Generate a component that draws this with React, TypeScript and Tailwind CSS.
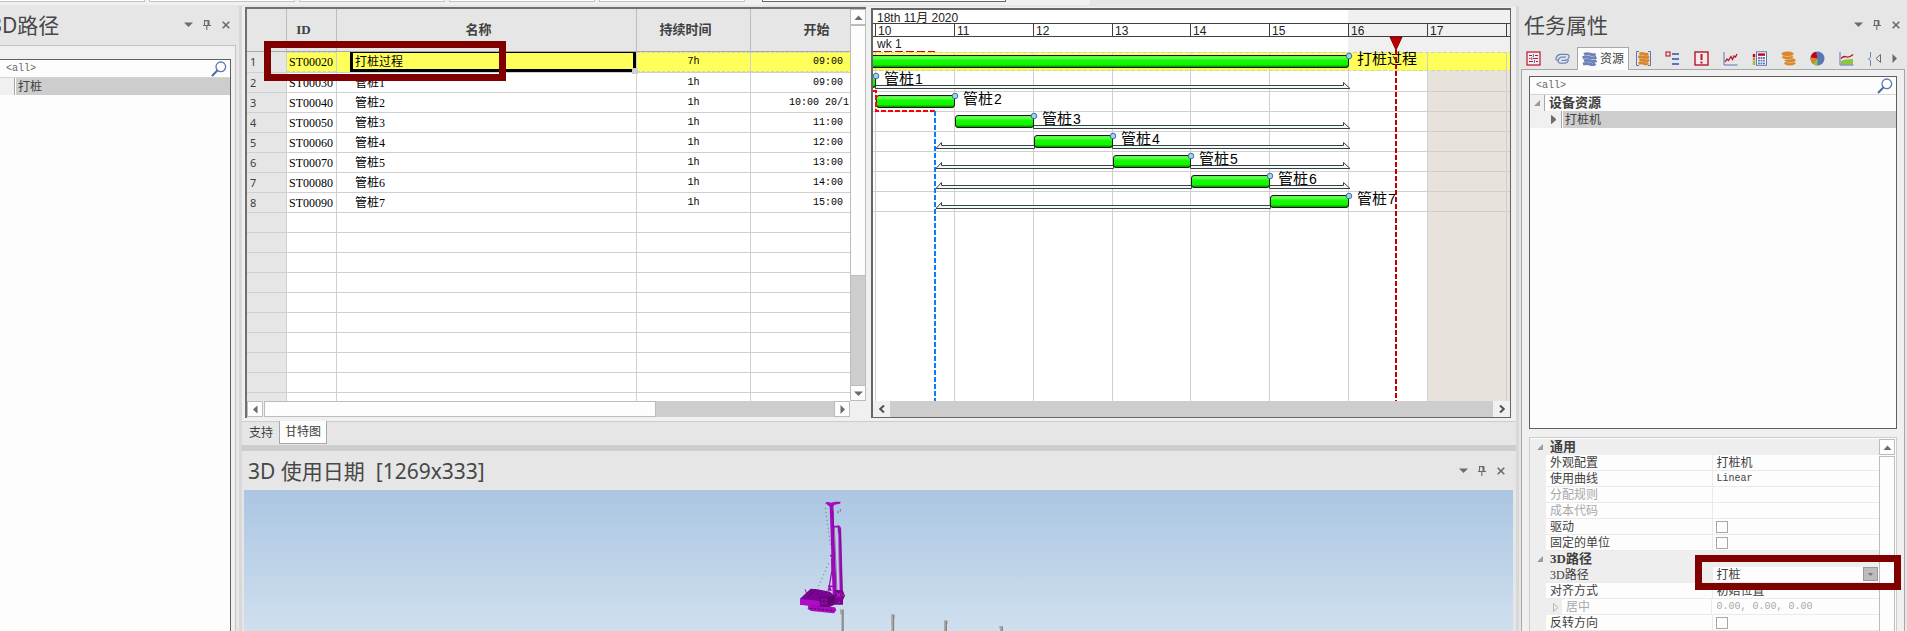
import React from "react";

const UI = "font-['Noto_Sans','Noto_Sans_CJK_SC',sans-serif]";
const SONG = "font-['Liberation_Serif','Noto_Sans_CJK_SC',sans-serif]";
const MONO = "font-['Liberation_Mono','Noto_Sans_CJK_SC',monospace]";

/* ---------- small glyphs ---------- */

function Triangle({ dir, hollow = false }: { dir: "up" | "down" | "left" | "right"; hollow?: boolean }) {
  const points = {
    up: "0.5,7 4.5,2.5 8.5,7",
    down: "0,2.5 9,2.5 4.5,7",
    left: "6.5,0.5 2,4.5 6.5,8.5",
    right: "2.5,0 7,4.5 2.5,9",
  }[dir];
  return (
    <svg width="9" height="9" viewBox="0 0 9 9" aria-hidden="true">
      <polygon points={points} fill={hollow ? "none" : "#6b6b6b"} stroke={hollow ? "#6b6b6b" : "none"} />
    </svg>
  );
}

function Expander({ dir }: { dir: "open" | "closed" | "hollow" }) {
  if (dir === "open") {
    return (
      <svg width="6" height="6" viewBox="0 0 6 6" aria-hidden="true">
        <polygon points="6,0 6,6 0,6" fill="#9b9b9b" />
      </svg>
    );
  }
  return (
    <svg width="6" height="9" viewBox="0 0 6 9" aria-hidden="true">
      <polygon
        points="0.5,0.5 5,4.5 0.5,8.5"
        fill={dir === "closed" ? "#6b6b6b" : "none"}
        stroke={dir === "closed" ? "#6b6b6b" : "#b5b5b5"}
      />
    </svg>
  );
}

function Magnifier() {
  return (
    <svg width="16" height="16" viewBox="0 0 16 16" className="shrink-0" aria-hidden="true">
      <circle cx="9.8" cy="5.8" r="4.8" fill="#fff" stroke="#5a78ad" strokeWidth="1.3" />
      <path d="M6.4 9.4 L1 15" stroke="#4a689f" strokeWidth="2" />
    </svg>
  );
}

function PanelTitle({ children, className = "" }: { children: React.ReactNode; className?: string }) {
  return (
    <div className={`flex shrink-0 items-center justify-between ${className}`}>
      <h2 className={`${UI} whitespace-pre text-[21px] leading-7 font-normal text-[#484848]`}>{children}</h2>
      <div className="flex items-center gap-[5px]">
        <button aria-label="菜单" className="flex w-[14px] justify-center">
          <Triangle dir="down" />
        </button>
        <button aria-label="固定" className="flex w-[14px] justify-center">
          <svg width="8" height="10" viewBox="0 0 8 10" aria-hidden="true">
            <path d="M1.5 5 V0.6 H5.5 V5 M0 5.5 H8 M3.8 6 V10" fill="none" stroke="#6b6b6b" strokeWidth="1.1" />
            <path d="M5.5 0.5 V5" stroke="#6b6b6b" strokeWidth="2" />
          </svg>
        </button>
        <button aria-label="关闭" className="flex w-[14px] justify-center">
          <svg width="8" height="8" viewBox="0 0 8 8" aria-hidden="true">
            <path d="M0.7 0.7 L7.3 7.3 M7.3 0.7 L0.7 7.3" stroke="#6b6b6b" strokeWidth="1.6" />
          </svg>
        </button>
      </div>
    </div>
  );
}

function SearchRow() {
  return (
    <div className="flex h-[18px] shrink-0 items-center border-b border-[#d4d4d4] bg-[#fdfdfd] pr-[3px] pl-[6px]">
      <input
        aria-label="筛选"
        defaultValue="<all>"
        className={`${MONO} h-[14px] min-w-0 flex-1 bg-transparent text-[10px] leading-[14px] text-[#666] outline-none`}
      />
      <Magnifier />
    </div>
  );
}

function ScrollButton({ dir }: { dir: "up" | "down" | "left" | "right" }) {
  return (
    <button
      aria-label={dir}
      className="flex h-4 w-4 shrink-0 items-center justify-center border border-[#bcbcbc] bg-[#fdfdfd]"
    >
      <Triangle dir={dir} />
    </button>
  );
}

/* ---------- top strip ---------- */

function TopStrip() {
  return (
    <div className="flex h-[6px] shrink-0 bg-[#e6e6e6]">
      <div className="flex h-[5px] gap-1 rounded-br bg-[#f0f0f0] pr-[84px]">
        <div className="h-[2px] w-[145px] border-r border-b border-[#c4c4c4] bg-[#fdfdfd]" />
        <div className="h-[2px] w-[146px] border-x border-b border-[#c4c4c4] bg-[#fdfdfd]" />
        <div className="h-[2px] w-[146px] border-x border-b border-[#c4c4c4] bg-[#fdfdfd]" />
        <div className="h-[2px] w-[146px] border-x border-b border-[#c4c4c4] bg-[#fdfdfd]" />
        <div className="h-[2px] w-[146px] border-x border-b border-[#c4c4c4] bg-[#fdfdfd]" />
        <div className="ml-[13px] h-[2px] w-[244px] border-x border-b border-[#666] bg-[#fdfdfd]" />
      </div>
    </div>
  );
}

/* ---------- left panel ---------- */

function PathPanel() {
  return (
    <aside className="flex w-[239px] shrink-0 flex-col overflow-hidden pr-[3px]">
      <PanelTitle className="-ml-[10px] h-[39px] pr-[3px] pb-[2px]">3D路径</PanelTitle>
      <div className="flex flex-1 flex-col border-t border-r border-[#c4c4c4] bg-[#f0f0f0] pt-[13px] pr-1">
        <div className="flex flex-1 flex-col border-t border-r border-[#606060] bg-[#fdfdfd]">
          <SearchRow />
          <div className="flex h-[17px]">
            <div className="w-[15px] border-r border-[#a8a8a8] bg-[#f0f0f0]" />
            <div
              className={`${SONG} ml-px flex flex-1 items-center bg-[#cdcdcd] pl-[2px] text-[12px] leading-4 text-[#404040]`}
            >
              打桩
            </div>
          </div>
        </div>
      </div>
    </aside>
  );
}

/* ---------- task table ---------- */

const TASKS = [
  { id: "ST00020", name: "打桩过程", dur: "7h", start: "09:00" },
  { id: "ST00030", name: "管桩1", dur: "1h", start: "09:00" },
  { id: "ST00040", name: "管桩2", dur: "1h", start: "10:00 20/1" },
  { id: "ST00050", name: "管桩3", dur: "1h", start: "11:00" },
  { id: "ST00060", name: "管桩4", dur: "1h", start: "12:00" },
  { id: "ST00070", name: "管桩5", dur: "1h", start: "13:00" },
  { id: "ST00080", name: "管桩6", dur: "1h", start: "14:00" },
  { id: "ST00090", name: "管桩7", dur: "1h", start: "15:00" },
];
const EMPTY_ROWS = Array.from({ length: 30 }, (_, i) => i);

const CELL = "border-r border-b border-[#cfcfcf] p-0";
const HEAD =
  "border-r border-b border-[#a8a8a8] border-r-[#bcbcbc] bg-[#e6e6e6] p-0 pr-4 text-center text-[13px] font-bold text-[#404040]";

function TaskTable() {
  return (
    <section className="flex min-w-0 flex-[619_1_0%] flex-col border-t-2 border-l-2 border-[#707070]">
      <div className="flex min-h-0 flex-1">
        <div className="relative min-w-0 flex-1 overflow-hidden bg-white">
          <table className={`${SONG} w-[652px] table-fixed border-separate border-spacing-0 text-[12px] leading-4 text-black`}>
            <colgroup>
              <col className="w-10" />
              <col className="w-[50px]" />
              <col className="w-[300px]" />
              <col className="w-[114px]" />
              <col className="w-[148px]" />
            </colgroup>
            <thead>
              <tr className="h-[43px]">
                <th className={HEAD} aria-label="行" />
                <th className={HEAD}>ID</th>
                <th className={HEAD}>名称</th>
                <th className={HEAD}>持续时间</th>
                <th className={HEAD}>开始</th>
              </tr>
            </thead>
            <tbody>
              {TASKS.map((t, i) => {
                const active = i === 0;
                const fill = active ? "h-5 bg-[#ffff5a] border-y border-dashed border-[#cfcfcf]" : "h-[19px]";
                return (
                  <tr key={t.id}>
                    <td className={`${CELL} ${UI} bg-[#e6e6e6] pl-[3px] text-[11px] text-[#404040]`}>{i + 1}</td>
                    <td className={CELL}>
                      <div className={`${fill} flex items-center pl-[2px]`}>{t.id}</div>
                    </td>
                    <td className={`${CELL} ${active ? "bg-[#ffff5a]" : ""}`}>
                      {active ? (
                        <div className="relative ml-[13px] flex h-5 items-center border-x-[3px] border-t border-b-[3px] border-black bg-[#ffff5a] pt-[2px] pl-[2px]">
                          {t.name}
                          <span className="absolute -right-[5px] -bottom-[5px] h-[6px] w-[6px] bg-[#cfcfcf]" />
                        </div>
                      ) : (
                        <div className="flex h-[19px] items-center pl-[18px]">{t.name}</div>
                      )}
                    </td>
                    <td className={CELL}>
                      <div className={`${fill} ${MONO} flex items-center justify-center text-[10px]`}>{t.dur}</div>
                    </td>
                    <td className={CELL}>
                      <div
                        className={`${fill} ${MONO} flex items-center justify-end text-[10px] whitespace-nowrap ${
                          t.start.length > 5 ? "pr-[49px]" : "pr-[55px]"
                        }`}
                      >
                        {t.start}
                      </div>
                    </td>
                  </tr>
                );
              })}
              {EMPTY_ROWS.map((r) => (
                <tr key={r} className="h-5">
                  <td className={`${CELL} bg-[#e6e6e6]`} />
                  <td className={CELL} />
                  <td className={CELL} />
                  <td className={CELL} />
                  <td className={CELL} />
                </tr>
              ))}
            </tbody>
          </table>
          <div className="pointer-events-none absolute top-8 left-[17px] h-10 w-[242px] border-[7px] border-[#800000]" />
        </div>
        <div className="flex w-4 shrink-0 flex-col border-r border-l border-[#bcbcbc] bg-[#cdcdcd]">
          <div className="-mx-px">
            <ScrollButton dir="up" />
          </div>
          <div className="flex-[250_1_0%] border-y border-[#bcbcbc] bg-[#fdfdfd]" />
          <div className="flex-[110_1_0%]" />
          <div className="-mx-px">
            <ScrollButton dir="down" />
          </div>
        </div>
      </div>
      <div className="flex h-[17px] shrink-0">
        <ScrollButton dir="left" />
        <div className="ml-px h-4 flex-[390_1_0%] border border-[#bcbcbc] bg-[#fdfdfd]" />
        <div className="h-4 flex-[178_1_0%] bg-[#cdcdcd]" />
        <ScrollButton dir="right" />
        <div className="w-4 shrink-0" />
      </div>
    </section>
  );
}

/* ---------- gantt chart ---------- */

const hourX = (h: number) => Math.round(2 + 78.85 * (h - 10));
const HOURS = [10, 11, 12, 13, 14, 15, 16, 17, 18];
const BARS = [
  { label: "打桩过程", num: "", from: 9, to: 16, early: false, late: false },
  { label: "管桩", num: "1", from: 9, to: 10, early: false, late: true },
  { label: "管桩", num: "2", from: 10, to: 11, early: false, late: false },
  { label: "管桩", num: "3", from: 11, to: 12, early: false, late: true },
  { label: "管桩", num: "4", from: 12, to: 13, early: true, late: true },
  { label: "管桩", num: "5", from: 13, to: 14, early: true, late: true },
  { label: "管桩", num: "6", from: 14, to: 15, early: true, late: true },
  { label: "管桩", num: "7", from: 15, to: 16, early: true, late: false },
];

function GanttChart() {
  const end = hourX(16) + 1;
  return (
    <svg
      className="block min-h-0 w-full flex-1 bg-white font-['Liberation_Sans','Noto_Sans_CJK_SC',sans-serif]"
      height="100%"
      shapeRendering="crispEdges"
      aria-label="甘特图"
    >
      <defs>
        <linearGradient id="bar" x1="0" y1="0" x2="0" y2="1">
          <stop offset="0" stopColor="#5af04a" />
          <stop offset="0.2" stopColor="#66ff55" />
          <stop offset="0.42" stopColor="#14fa04" />
          <stop offset="0.75" stopColor="#10f400" />
          <stop offset="1" stopColor="#067a00" />
        </linearGradient>
      </defs>

      <rect x={hourX(16)} y="0" width="100%" height="42" fill="#f0f0f0" />
      <rect x={hourX(17)} y="61" width="100%" height="100%" fill="#e7e2db" />
      <rect x="0" y="42" width="100%" height="19" fill="#ffff5a" />

      {HOURS.map((h) => (
        <rect key={h} x={hourX(h)} y="42" width="1" height="100%" fill="#cfcfcf" />
      ))}
      {[81, 101, 121, 141, 161, 181, 201].map((y) => (
        <rect key={y} x="0" y={y} width="100%" height="1" fill="#cfcfcf" />
      ))}
      <line x1="0" x2="100%" y1="42.5" y2="42.5" stroke="#cfcfcf" strokeDasharray="4 2" />
      <line x1="0" x2="100%" y1="60.5" y2="60.5" stroke="#cfcfcf" strokeDasharray="4 2" />

      <rect x="0" y="13" width="100%" height="1" fill="#404040" />
      <rect x="0" y="26" width="100%" height="1" fill="#404040" />
      <text x="4" y="12" fontSize="12" fill="#222">
        18th 11月 2020
      </text>
      {HOURS.map((h) => (
        <g key={h}>
          <rect x={hourX(h)} y="13" width="1" height="14" fill="#404040" />
          <text x={hourX(h) + 3} y="25" fontSize="12" fill="#222">
            {h}
          </text>
        </g>
      ))}
      <text x="4" y="38" fontSize="12" fill="#222">
        wk 1
      </text>

      <line x1="0" y1="41.5" x2="62" y2="41.5" stroke="#d00000" strokeDasharray="8 3" />

      {BARS.map((b, i) => {
        const x1 = hourX(b.from) + 1;
        const x2 = hourX(b.to) + 1;
        const y = 45 + 20 * i;
        const f = y + 10;
        return (
          <g key={i} shapeRendering="auto">
            {b.late && (
              <path
                d={`M${x2 - 0.5} ${f + 0.5} H${end - 5.5} V${f - 2.5} L${end + 1} ${f + 3.5} H${x2 - 0.5} Z`}
                fill="#ecfcfc"
                stroke="#404040"
              />
            )}
            {b.early && (
              <path
                d={`M${x1 + 0.5} ${f + 0.5} H68.5 V${f - 2.5} L63 ${f + 3.5} H${x1 + 0.5} Z`}
                fill="#ecfcfc"
                stroke="#404040"
              />
            )}
            <rect x={x1 + 0.5} y={y + 0.5} width={x2 - x1 - 1} height="12" rx="2.5" fill="url(#bar)" stroke="#0a1f08" />
            <circle cx={x2} cy={y + 1} r="2.8" fill="#9fd2f0" stroke="#3d7299" />
            <text x={x2 + 8} y={y + 9} fontSize="15" fill="#000">
              {b.label}
              <tspan fontSize="14" dx={b.num ? 1 : undefined}>
                {b.num}
              </tspan>
            </text>
          </g>
        );
      })}

      <path d="M0 81 H3 V101 H62" fill="none" stroke="#f00" strokeWidth="2" strokeDasharray="5 2" />
      <line x1="62" y1="101" x2="62" y2="100%" stroke="#0080ff" strokeWidth="2" strokeDasharray="5 2" />
      <line x1="523" y1="40" x2="523" y2="100%" stroke="#c00000" strokeWidth="2" strokeDasharray="5 2" />
      <polygon points="517,27 529,27 523,40" fill="#c00000" stroke="#800000" shapeRendering="auto" />
    </svg>
  );
}

function GanttPanel() {
  return (
    <section className="mt-px flex min-w-0 flex-[637_1_0%] flex-col border-t-2 border-r border-b border-l-2 border-[#666]">
      <GanttChart />
      <div className="flex h-4 shrink-0 bg-[#cdcdcd]">
        <button aria-label="向左" className="flex w-[17px] items-center justify-center bg-[#f0f0f0]">
          <svg width="6" height="8" viewBox="0 0 6 8" aria-hidden="true">
            <path d="M5 0.5 L1.2 4 L5 7.5" fill="none" stroke="#505050" strokeWidth="2" />
          </svg>
        </button>
        <div className="flex-1" />
        <button aria-label="向右" className="flex w-[17px] items-center justify-center bg-[#f0f0f0]">
          <svg width="6" height="8" viewBox="0 0 6 8" aria-hidden="true">
            <path d="M1 0.5 L4.8 4 L1 7.5" fill="none" stroke="#505050" strokeWidth="2" />
          </svg>
        </button>
      </div>
    </section>
  );
}

/* ---------- 3D view ---------- */

function Scene() {
  return (
    <div className="min-h-0 flex-1 bg-linear-to-b from-[#abc6e2] to-[#cfdfee]">
      <svg width="100%" height="100%" className="block" aria-label="3D">
        <g transform="translate(496 -10) scale(0.33333)">
          <g fill="none" stroke="#6a6f80" strokeWidth="3" strokeDasharray="3 9">
            <path d="M256 84 L272 200" />
            <path d="M266 250 L232 326" />
          </g>
          <path d="M255 69 L263 65 L272 68 L285 65 L302 65 L300 71 L284 74 L279 80 L270 80 L263 75 Z" fill="#a80cc0" />
          <path d="M294 92 V100 M301 87 V95" stroke="#8a60a8" strokeWidth="3" />
          <path d="M269 75 H280 L290 372 H279 Z" fill="#a208bb" />
          <path d="M279 90 L290 372" stroke="#6d0a80" strokeWidth="2" />
          <path d="M283 140 L291 330" stroke="#8d6fa8" strokeWidth="3" />
          <path d="M281 140 H298 M264 319 H283" stroke="#a208bb" strokeWidth="5" />
          <path d="M293 134 L302 141 L308 345 H299 Z" fill="#a208bb" />
          <path d="M302 145 L307 330" stroke="#5d0570" strokeWidth="2" />
          <path d="M295 160 L298 330" stroke="#b895c6" strokeWidth="2" />
          <path d="M270 225 L279 222 L281 232 L272 231 Z" fill="#a208bb" />
          <path d="M275 235 L276 270 L268 318" stroke="#a208bb" strokeWidth="4" fill="none" />
          <path d="M285 330 H308 L315 347 L309 360 V374 H285 Z" fill="#7b0590" />
          <path d="M290 338 L302 352 M302 338 L290 352 M304 345 H313" stroke="#c030d6" strokeWidth="3" />
          <circle cx="297" cy="367" r="5" fill="#a80cc0" stroke="#5d0570" strokeWidth="2" />
          <path d="M195 328 L200 340" stroke="#a208bb" strokeWidth="3" />
          <path d="M205 376 L285 382 L289 390 L282 400 L214 393 L203 387 Z" fill="#a80cc0" />
          <path d="M210 385 L283 392" stroke="#5d0570" strokeWidth="4" strokeDasharray="7 5" />
          <path d="M180 356 L212 326 L232 328 L270 335 L284 348 V374 L268 382 L240 380 L180 374 Z" fill="#7a0492" />
          <path d="M180 356 L246 364 V379 L180 374 Z" fill="#ad0ec6" />
          <path d="M204 350 L228 329" stroke="#4f0560" strokeWidth="3" />
          <path d="M262 332 L268 316 L276 332 Z" fill="#a208bb" />
          <path d="M241 353 H263 V377 H241 Z" fill="#8a0aa0" stroke="#5d0570" strokeWidth="3" />
          <path d="M252 354 V376 M243 364 H262" stroke="#5d0570" strokeWidth="2" />
          <path d="M264 352 L284 346 V374 H266 Z" fill="#5a0570" />
          <g>
            <path d="M300 388 H311 V453 H304 V403 H300 Z" fill="#aaa8a4" />
            <path d="M309 390 V453" stroke="#77777a" strokeWidth="3" />
            <path d="M453 403 H464 V416 H462 V453 H454 Z" fill="#aaa8a4" />
            <path d="M461 405 V453" stroke="#808083" strokeWidth="3" />
            <path d="M612 421 H623 V432 H620 V453 H612 Z" fill="#aaa8a4" />
            <path d="M619 424 V453" stroke="#77777a" strokeWidth="3" />
            <path d="M778 438 H789 V453 H780 V446 H778 Z" fill="#aaa8a4" />
            <path d="M787 441 V453" stroke="#808083" strokeWidth="3" />
          </g>
        </g>
      </svg>
    </div>
  );
}

function Center() {
  return (
    <main className="flex min-w-0 flex-1 flex-col">
      <div className="flex min-h-0 flex-[438_1_0%] flex-col pt-px">
        <div className="flex min-h-0 flex-1 gap-[5px] bg-[#f0f0f0] pr-[5px] pb-[3px] pl-[3px]">
          <TaskTable />
          <GanttPanel />
        </div>
        <div className={`${UI} flex h-6 shrink-0 border-t border-[#cdcdcd] pl-px text-[12px] text-[#404040]`}>
          <button className="px-[6px] pb-[2px]">支持</button>
          <button className="-mt-px mb-px border border-t-0 border-[#a8a8a8] bg-[#fdfdfd] px-[5px]">甘特图</button>
        </div>
      </div>
      <div className="h-[6px] shrink-0 bg-[#cdcdcd]" />
      <div className="flex min-h-0 flex-[180_1_0%] flex-col pr-[3px] pl-[2px]">
        <PanelTitle className="h-[39px] pr-[5px] pl-1">{"3D 使用日期  [1269x333]"}</PanelTitle>
        <Scene />
      </div>
    </main>
  );
}

/* ---------- right panel ---------- */

function StackGlyph({ color }: { color: string }) {
  return (
    <g fill="none" stroke={color} strokeWidth="3">
      <path d="M2 2.4 Q5 1 8 2.2 T13.5 2" />
      <path d="M0.5 5.6 Q5 4.4 8 5.6 T14.5 5.2" />
      <path d="M2 8.9 Q5 7.6 8 8.9 T14.5 8.5" />
      <path d="M1 12 Q5 11 8 12.2 T13.5 11.8" />
    </g>
  );
}

const TABS: { name: string; icon: React.ReactNode }[] = [
  {
    name: "资源分配",
    icon: (
      <>
        <path d="M3 0.5 H0.5 V14.5 H3 M12 0.5 H14.5 V14.5 H12" fill="none" stroke="#5b76b5" />
        <g transform="translate(1.8 0.8) scale(0.78 0.96)">
          <StackGlyph color="#d9862a" />
        </g>
      </>
    ),
  },
  {
    name: "结构",
    icon: (
      <>
        <rect x="1" y="1" width="4" height="4" fill="none" stroke="#c4001a" />
        <path d="M7 3 H14 M7 8 H14 M7 13 H14" stroke="#5b76b5" strokeWidth="2" />
      </>
    ),
  },
  {
    name: "警告",
    icon: (
      <>
        <rect x="1" y="1" width="13" height="13" fill="#f6e9e9" stroke="#b8142a" strokeWidth="1.4" />
        <path d="M7.5 3 V9 M7.5 10.5 V12.5" stroke="#b8142a" strokeWidth="2" />
      </>
    ),
  },
  {
    name: "曲线",
    icon: (
      <>
        <path d="M1 1 V14 H14.5" fill="none" stroke="#5b76b5" />
        <path d="M2 11 L4 8 L5.5 9.5 L8 5.5 L9.5 8.5 L11 5 L12.5 6 L14 3" fill="none" stroke="#b8142a" strokeWidth="1.3" />
      </>
    ),
  },
  {
    name: "成本",
    icon: (
      <>
        <rect x="4.5" y="0.8" width="10" height="13.5" fill="#fdfdfd" stroke="#5b76b5" />
        <rect x="6" y="2.4" width="7" height="2.4" fill="#c4001a" />
        <path d="M6 7 H13 M6 9.7 H13 M6 12.3 H13" stroke="#5b76b5" strokeWidth="1.8" strokeDasharray="1.9 0.6" />
        <path d="M2 3 V6" stroke="#c4001a" strokeWidth="2.4" />
        <path d="M2 6.5 V9.5" stroke="#d9862a" strokeWidth="2.4" />
        <path d="M2 10 V14" stroke="#8cc63f" strokeWidth="2.4" />
      </>
    ),
  },
  {
    name: "费用",
    icon: (
      <g fill="#d9862a" stroke="#ece2d4" strokeWidth="0.5">
        <ellipse cx="8.8" cy="12.2" rx="5.8" ry="2.5" />
        <ellipse cx="9.2" cy="9.2" rx="5.6" ry="2.5" />
        <ellipse cx="6.6" cy="6.1" rx="5.8" ry="2.5" />
        <ellipse cx="6.6" cy="2.9" rx="6.2" ry="2.6" />
      </g>
    ),
  },
  {
    name: "饼图",
    icon: (
      <>
        <circle cx="7.5" cy="7.5" r="7" fill="#5b76b5" />
        <path d="M7.5 7.5 L6 0.7 A7 7 0 0 0 0.6 6.5 Z" fill="#c4001a" />
        <path d="M7.5 7.5 L0.6 6.5 A7 7 0 0 0 3 12.9 Z" fill="#d9862a" />
        <path d="M7.5 7.5 L3 12.9 A7 7 0 0 0 7.5 14.5 Z" fill="#8cc63f" />
      </>
    ),
  },
  {
    name: "面积图",
    icon: (
      <>
        <path d="M2 10 L6 8.6 L14 8 V13.5 H2 Z" fill="#8cc63f" />
        <path d="M2 7.5 Q5 4.5 7.5 6 Q10 7 14 3.5" fill="none" stroke="#b8142a" strokeWidth="1.3" />
        <path d="M1 1 V14 H14.5" fill="none" stroke="#5b76b5" />
      </>
    ),
  },
];

function TabIcon({ name, children }: { name: string; children: React.ReactNode }) {
  return (
    <button aria-label={name} className="flex w-[29px] shrink-0 items-center justify-center">
      <svg width="15" height="15" viewBox="0 0 15 15" aria-hidden="true">
        {children}
      </svg>
    </button>
  );
}

function TabBar() {
  return (
    <div className="z-10 -mb-px flex h-[23px] shrink-0">
      <TabIcon name="参数">
        <rect x="1" y="1" width="13" height="13" fill="#f8eeee" stroke="#b8142a" strokeWidth="1.2" />
        <path d="M3 4.5 H6 M9 4.5 H12 M3 7.5 H4.5 M7 7.5 H12 M3 10.5 H7 M10 10.5 H12" stroke="#b8142a" strokeWidth="1.1" />
        <path d="M7.5 3 V6 M5.8 6 V9 M8.5 9 V12" stroke="#5b76b5" strokeWidth="1.1" />
      </TabIcon>
      <TabIcon name="链接">
        <g fill="none" stroke="#6d83ba" strokeWidth="1.2">
          <path d="M3.6 9.6 H3 Q0.6 9.4 1 7.4 Q1.8 4 5 3.4 H12 Q14.6 3.8 14 6.2 Q13.2 9 10.5 9.4 H6.5" />
          <path d="M11 6.2 H6.4 Q3.8 6.6 3.2 9.4 Q2.8 11.8 5 12.2 H10 Q12.6 11.8 13.6 9" />
        </g>
      </TabIcon>
      <button
        className={`${UI} flex items-center gap-[3px] border border-b-0 border-[#a8a8a8] bg-[#fdfdfd] px-1 text-[12px] text-[#404040]`}
      >
        <svg width="15" height="14" viewBox="0 0 15 14" aria-hidden="true">
          <StackGlyph color="#6d83ba" />
        </svg>
        资源
      </button>
      {TABS.map((t) => (
        <TabIcon key={t.name} name={t.name}>
          {t.icon}
        </TabIcon>
      ))}
      <div className="flex min-w-0 flex-1 items-center justify-between pr-2 pl-[7px]">
        <svg width="3" height="14" viewBox="0 0 3 14" aria-hidden="true">
          <path d="M2.5 0 V5.5 L0.5 7 L2.5 8.5 V14" fill="none" stroke="#6d83ba" />
        </svg>
        <button aria-label="上一个">
          <Triangle dir="left" hollow />
        </button>
        <button aria-label="下一个" className="ml-1">
          <Triangle dir="right" />
        </button>
      </div>
    </div>
  );
}

type Prop =
  | { kind: "group"; label: string }
  | { kind: "text"; label: string; value: string; dim?: boolean; latin?: boolean; child?: boolean }
  | { kind: "check"; label: string }
  | { kind: "select"; label: string; value: string };

const PROPS: Prop[] = [
  { kind: "group", label: "通用" },
  { kind: "text", label: "外观配置", value: "打桩机" },
  { kind: "text", label: "使用曲线", value: "Linear", latin: true },
  { kind: "text", label: "分配规则", value: "", dim: true },
  { kind: "text", label: "成本代码", value: "", dim: true },
  { kind: "check", label: "驱动" },
  { kind: "check", label: "固定的单位" },
  { kind: "group", label: "3D路径" },
  { kind: "select", label: "3D路径", value: "打桩" },
  { kind: "text", label: "对齐方式", value: "初始位置" },
  { kind: "text", label: "居中", value: "0.00, 0.00, 0.00", dim: true, latin: true, child: true },
  { kind: "check", label: "反转方向" },
];

function PropertyRow({ prop, index }: { prop: Prop; index: number }) {
  const id = `prop-${index}`;
  if (prop.kind === "group") {
    return (
      <div className="flex h-4 shrink-0 items-center bg-[#eeeeee]">
        <div className="flex w-4 justify-center pl-1">
          <Expander dir="open" />
        </div>
        <h3 className="pl-1 text-[13px] font-bold">{prop.label}</h3>
      </div>
    );
  }
  const dim = prop.kind === "text" && prop.dim;
  const child = prop.kind === "text" && prop.child;
  const selected = prop.kind === "select";
  return (
    <div className={`flex h-4 shrink-0 bg-[#eeeeee] pl-4 ${dim ? "text-[#a8a8a8]" : ""}`}>
      {child && (
        <div className="flex w-4 shrink-0 items-center justify-center pl-1">
          <Expander dir="hollow" />
        </div>
      )}
      <div
        className={`flex min-w-0 items-center border-r border-b border-[#eaeaea] pl-1 ${
          selected ? "bg-[#eeeeee]" : "bg-[#fdfdfd]"
        } ${child ? "flex-[145_1_0%]" : "flex-[161_1_0%]"}`}
      >
        <label htmlFor={id}>{prop.label}</label>
      </div>
      <div className="relative flex min-w-0 flex-[166_1_0%] items-center border-b border-[#eaeaea] bg-[#fdfdfd]">
        {prop.kind === "check" && (
          <input
            id={id}
            type="checkbox"
            className="ml-[3px] h-3 w-3 appearance-none border border-[#a8a8a8] bg-[#fdfdfd]"
          />
        )}
        {prop.kind === "text" && (
          <input
            id={id}
            defaultValue={prop.value}
            className={`w-full min-w-0 bg-transparent pl-1 outline-none ${prop.latin ? `${MONO} text-[10px]` : ""}`}
          />
        )}
        {prop.kind === "select" && (
          <>
            <select id={id} className="h-full w-full appearance-none bg-transparent pl-1 outline-none">
              <option>{prop.value}</option>
            </select>
            <span className="pointer-events-none absolute top-0 right-px flex h-[14px] w-[15px] items-center justify-center border border-[#999] bg-[#bcbcbc]">
              <svg width="5" height="3" viewBox="0 0 5 3" aria-hidden="true">
                <polygon points="0,0 5,0 2.5,3" fill="#777" />
              </svg>
            </span>
            <div className="pointer-events-none absolute -top-[12px] -right-[22px] -left-[18px] z-10 h-[35px] border-[7px] border-[#800000]" />
          </>
        )}
      </div>
    </div>
  );
}

function TaskProperties() {
  return (
    <aside className="flex w-[388px] shrink-0 flex-col">
      <PanelTitle className="h-[41px] pr-1 pb-1 pl-[5px]">任务属性</PanelTitle>
      <TabBar />
      <div
        className={`${SONG} mr-[2px] ml-[2px] flex min-h-0 flex-1 flex-col border-x border-t border-[#a8a8a8] bg-[#f0f0f0] pt-[6px] pr-[7px] pl-[7px] text-[12px] leading-4 text-[#404040]`}
      >
        <div className="flex min-h-0 flex-[353_1_0%] flex-col border border-[#606060] bg-[#fdfdfd]">
          <SearchRow />
          <div className="flex h-4 items-center">
            <div className="flex h-full w-[15px] shrink-0 items-center justify-center border-r border-[#a8a8a8] bg-[#f0f0f0]">
              <Expander dir="open" />
            </div>
            <span className="pl-1 text-[13px] font-bold">设备资源</span>
          </div>
          <div className="flex h-[17px] items-center">
            <div className="flex h-full w-8 shrink-0 items-center justify-end border-r border-[#a8a8a8] bg-[#f0f0f0] pr-[4px]">
              <Expander dir="closed" />
            </div>
            <div className="ml-px flex h-full flex-1 items-center bg-[#cdcdcd] pl-[2px]">打桩机</div>
          </div>
        </div>
        <div className="mt-2 flex min-h-0 flex-[193_1_0%] border-x border-t border-[#cdcdcd] bg-[#fdfdfd] pt-px">
          <div className="flex min-w-0 flex-1 flex-col">
            {PROPS.map((p, i) => (
              <PropertyRow key={i} prop={p} index={i} />
            ))}
          </div>
          <div className="flex w-[17px] shrink-0 flex-col">
            <ScrollButton dir="up" />
            <div className="mt-px mr-px flex-1 border border-b-0 border-[#bcbcbc] bg-[#fdfdfd]" />
          </div>
        </div>
      </div>
    </aside>
  );
}

export default function App() {
  return (
    <div className="flex h-screen flex-col overflow-hidden bg-[#e6e6e6]">
      <TopStrip />
      <div className="flex min-h-0 flex-1">
        <PathPanel />
        <div className="w-[3px] shrink-0 bg-[#d8d8d8]" />
        <Center />
        <div className="w-[3px] shrink-0 bg-[#d8d8d8]" />
        <TaskProperties />
      </div>
    </div>
  );
}
